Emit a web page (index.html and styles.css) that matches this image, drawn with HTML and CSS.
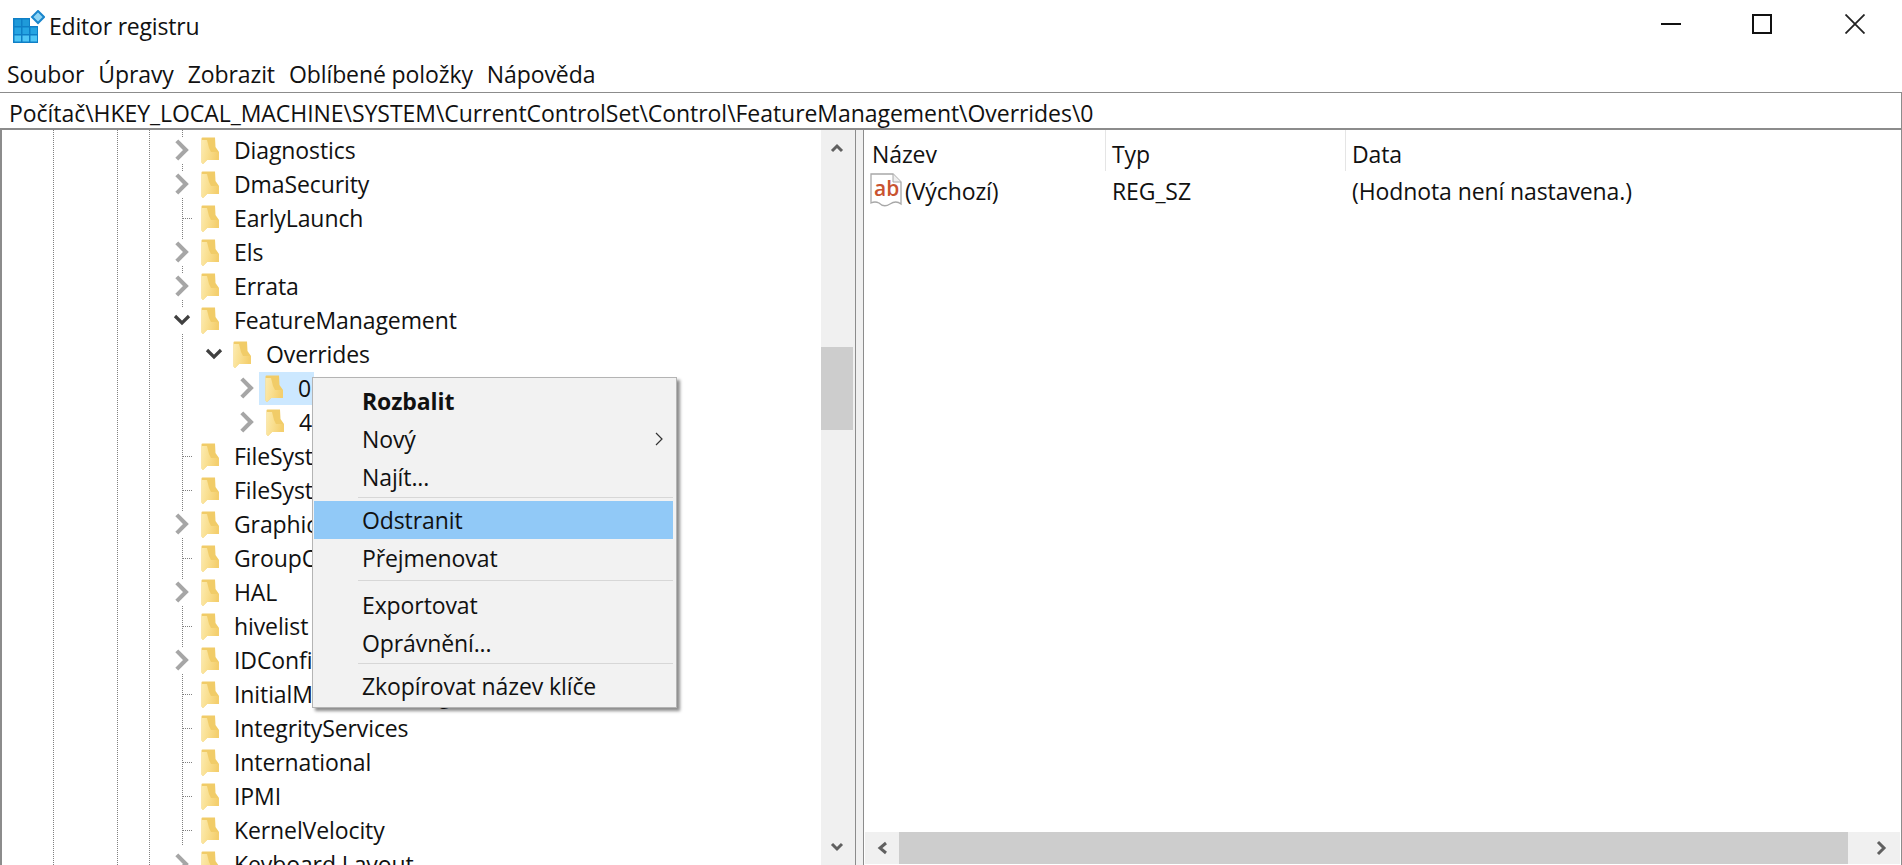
FILE: index.html
```html
<!DOCTYPE html>
<html lang="cs">
<head>
<meta charset="utf-8">
<title>Editor registru</title>
<link rel="stylesheet" href="styles.css">
</head>
<body>
<svg class="defs" width="0" height="0" aria-hidden="true">
  <defs>
    <linearGradient id="fg" x1="0" y1="0" x2="1" y2="0.25">
      <stop offset="0" stop-color="#fcebb0"/>
      <stop offset="0.5" stop-color="#f9de8e"/>
      <stop offset="1" stop-color="#f4cf6e"/>
    </linearGradient>
    <symbol id="folder" viewBox="0 0 18 27">
      <path d="M0.5 1.5 Q0.5 .5 1.5 .5 H14 L14.5 10 L18 15 V23 H6 L2 27 L0.5 25.5 Z" fill="#f1cc68"/>
      <path d="M0.5 3 L6 3 L8 11 L10 15 L18 15 V23 H6 L2 27 L0.5 25.5 Z" fill="url(#fg)"/>
    </symbol>
    <symbol id="chev-r" viewBox="0 0 14 20"><path d="M3 3 L10 10 L3 17" fill="none" stroke="#a6a6a6" stroke-width="3.2"/></symbol>
    <symbol id="chev-d" viewBox="0 0 20 14"><path d="M3 3 L10 10 L17 3" fill="none" stroke="#404040" stroke-width="3.2"/></symbol>
  </defs>
</svg>

<header class="titlebar">
  <svg class="app-icon" viewBox="0 0 32 34" width="32" height="34">
    <path d="M0 8 H17 V16 H25 V33 H0 Z" fill="#0f7fc6"/>
    <rect x="1.5" y="9.5" width="6.5" height="6.5" fill="#1f9ad9"/><rect x="9.5" y="9.5" width="6.5" height="6.5" fill="#1f9ad9"/>
    <rect x="1.5" y="17.5" width="6.5" height="6.5" fill="#25a4e2"/><rect x="9.5" y="17.5" width="6.5" height="6.5" fill="#25a4e2"/><rect x="17.5" y="17.5" width="6.5" height="6.5" fill="#25a4e2"/>
    <rect x="1.5" y="25.5" width="6.5" height="6" fill="#4fc6f5"/><rect x="9.5" y="25.5" width="6.5" height="6" fill="#4fc6f5"/><rect x="17.5" y="25.5" width="6.5" height="6" fill="#4fc6f5"/>
    <path d="M25 1 L31 7 L25 13 L19 7 Z" fill="#8fd5f5" stroke="#1a86cc" stroke-width="2"/>
  </svg>
  <span class="title">Editor registru</span>
  <div class="controls">
    <svg class="ctl ctl-min" viewBox="0 0 20 20" width="20" height="20"><path d="M0 10 H20" stroke="#111" stroke-width="2"/></svg>
    <svg class="ctl ctl-max" viewBox="0 0 20 20" width="20" height="20"><rect x="1" y="1" width="18" height="18" fill="none" stroke="#111" stroke-width="2"/></svg>
    <svg class="ctl ctl-close" viewBox="0 0 20 20" width="20" height="20"><path d="M0.5 0.5 L19.5 19.5 M19.5 0.5 L0.5 19.5" stroke="#222" stroke-width="1.8"/></svg>
  </div>
</header>

<nav class="menubar">
  <span>Soubor</span><span>Úpravy</span><span>Zobrazit</span><span>Oblíbené položky</span><span>Nápověda</span>
</nav>

<div class="address">Počítač\HKEY_LOCAL_MACHINE\SYSTEM\CurrentControlSet\Control\FeatureManagement\Overrides\0</div>

<main class="panes">
  <section class="tree-pane">
    <ul class="tree">
      <li class="row"><svg class="chev"><use href="#chev-r"/></svg><svg class="folder"><use href="#folder"/></svg><span>Diagnostics</span></li>
      <li class="row"><svg class="chev"><use href="#chev-r"/></svg><svg class="folder"><use href="#folder"/></svg><span>DmaSecurity</span></li>
      <li class="row"><i class="tick"></i><svg class="folder"><use href="#folder"/></svg><span>EarlyLaunch</span></li>
      <li class="row"><svg class="chev"><use href="#chev-r"/></svg><svg class="folder"><use href="#folder"/></svg><span>Els</span></li>
      <li class="row"><svg class="chev"><use href="#chev-r"/></svg><svg class="folder"><use href="#folder"/></svg><span>Errata</span></li>
      <li class="row"><svg class="chev open"><use href="#chev-d"/></svg><svg class="folder"><use href="#folder"/></svg><span>FeatureManagement</span></li>
      <li class="row lvl2"><svg class="chev open"><use href="#chev-d"/></svg><svg class="folder"><use href="#folder"/></svg><span>Overrides</span></li>
      <li class="row lvl3"><svg class="chev"><use href="#chev-r"/></svg><div class="selected"><svg class="folder"><use href="#folder"/></svg><span>0</span></div></li>
      <li class="row lvl3"><svg class="chev"><use href="#chev-r"/></svg><svg class="folder"><use href="#folder"/></svg><span>4</span></li>
      <li class="row"><i class="tick"></i><svg class="folder"><use href="#folder"/></svg><span>FileSystem</span></li>
      <li class="row"><i class="tick"></i><svg class="folder"><use href="#folder"/></svg><span>FileSystemUtilities</span></li>
      <li class="row"><svg class="chev"><use href="#chev-r"/></svg><svg class="folder"><use href="#folder"/></svg><span>GraphicsDrivers</span></li>
      <li class="row"><i class="tick"></i><svg class="folder"><use href="#folder"/></svg><span>GroupOrderList</span></li>
      <li class="row"><svg class="chev"><use href="#chev-r"/></svg><svg class="folder"><use href="#folder"/></svg><span>HAL</span></li>
      <li class="row"><i class="tick"></i><svg class="folder"><use href="#folder"/></svg><span>hivelist</span></li>
      <li class="row"><svg class="chev"><use href="#chev-r"/></svg><svg class="folder"><use href="#folder"/></svg><span>IDConfigDB</span></li>
      <li class="row"><i class="tick"></i><svg class="folder"><use href="#folder"/></svg><span>InitialMachineConfig</span></li>
      <li class="row"><i class="tick"></i><svg class="folder"><use href="#folder"/></svg><span>IntegrityServices</span></li>
      <li class="row"><i class="tick"></i><svg class="folder"><use href="#folder"/></svg><span>International</span></li>
      <li class="row"><i class="tick"></i><svg class="folder"><use href="#folder"/></svg><span>IPMI</span></li>
      <li class="row"><i class="tick"></i><svg class="folder"><use href="#folder"/></svg><span>KernelVelocity</span></li>
      <li class="row"><svg class="chev"><use href="#chev-r"/></svg><svg class="folder"><use href="#folder"/></svg><span>Keyboard Layout</span></li>
    </ul>
    <div class="vscroll">
      <svg class="sb-btn" viewBox="0 0 32 34" width="32" height="34"><path d="M11 21 L16 16 L21 21" fill="none" stroke="#606060" stroke-width="3"/></svg>
      <div class="vtrack"><div class="vthumb"></div></div>
      <svg class="sb-btn" viewBox="0 0 32 34" width="32" height="34"><path d="M11 13 L16 18 L21 13" fill="none" stroke="#606060" stroke-width="3"/></svg>
    </div>
  </section>
  <div class="splitter"></div>
  <section class="list-pane">
    <div class="list-head">
      <div class="col col-name">Název</div>
      <div class="col col-type">Typ</div>
      <div class="col col-data">Data</div>
    </div>
    <div class="list-row">
      <div class="col col-name cell-name">
        <svg class="ab" viewBox="0 0 32 34" width="32" height="34">
          <path d="M1 1 H23 L31 9 V31 Q26 27 20 31 T9 30 Q5 28 1 30 Z" fill="#fff" stroke="#a8a8a8" stroke-width="1.3"/>
          <path d="M23 1 V9 H31" fill="#efefef" stroke="#a8a8a8" stroke-width="1"/>
          <text x="4" y="23" class="ab-text">ab</text>
        </svg>
        <span>(Výchozí)</span>
      </div>
      <div class="col col-type">REG_SZ</div>
      <div class="col col-data">(Hodnota není nastavena.)</div>
    </div>
    <div class="list-fill"></div>
    <div class="hscroll">
      <svg class="sb-btn" viewBox="0 0 34 32" width="34" height="32"><path d="M21 11 L15 16 L21 21" fill="none" stroke="#606060" stroke-width="3"/></svg>
      <div class="hthumb"></div>
      <svg class="sb-btn sb-right" viewBox="0 0 52 32" width="52" height="32"><path d="M30 10 L36 16 L30 22" fill="none" stroke="#606060" stroke-width="3"/></svg>
    </div>
  </section>
</main>

<div class="ctx">
  <div class="ctx-item strong">Rozbalit</div>
  <div class="ctx-item">Nový<svg class="sub" viewBox="0 0 8 14" width="8" height="14"><path d="M1 1 L7 7 L1 13" fill="none" stroke="#333" stroke-width="1.2"/></svg></div>
  <div class="ctx-item">Najít...</div>
  <div class="ctx-sep sep-a"></div>
  <div class="ctx-item hot">Odstranit</div>
  <div class="ctx-item">Přejmenovat</div>
  <div class="ctx-sep sep-b"></div>
  <div class="ctx-item">Exportovat</div>
  <div class="ctx-item">Oprávnění...</div>
  <div class="ctx-sep sep-a"></div>
  <div class="ctx-item">Zkopírovat název klíče</div>
</div>
</body>
</html>
```
FILE: styles.css
```css
* { box-sizing: border-box; }
html, body { margin: 0; height: 100%; }
body {
  width: 1902px; height: 865px; overflow: hidden; position: relative;
  background: #fff; color: #111;
  font-family: "Open Sans", "Noto Sans", sans-serif; font-size: 23px;
  letter-spacing: -0.1px;
}
.defs { position: absolute; }

.titlebar { height: 55px; display: flex; align-items: center; padding-left: 13px; }
.app-icon { flex: none; margin-top: -1px; }
.title { margin-left: 4px; margin-top: -3px; letter-spacing: -0.2px; }
.controls { margin-left: auto; display: flex; align-items: center; margin-top: -7px; padding-right: 37px; }
.ctl-max { margin-left: 71px; }
.ctl-close { margin-left: 73px; }

.menubar { height: 37px; display: flex; align-items: center; gap: 14px; padding-left: 7px; }

.address { height: 38px; border: 1px solid #8c8c8c; border-bottom-width: 2px; border-left: 0; padding-left: 9px; line-height: 40px; white-space: nowrap; letter-spacing: -0.05px; }

.panes { height: 735px; display: flex; border-left: 2px solid #8c8c8c; border-right: 1px solid #8c8c8c; }

.tree-pane { width: 853px; flex: none; display: flex; height: 100%; overflow: hidden; }
.tree {
  list-style: none; margin: 0; padding: 3px 0 0; width: 819px; flex: none; height: 100%; overflow: hidden;
  background:
    repeating-linear-gradient(to bottom, #808080 0 1px, transparent 1px 2px) 51px 0 / 1px 100% no-repeat,
    repeating-linear-gradient(to bottom, #808080 0 1px, transparent 1px 2px) 115px 0 / 1px 100% no-repeat,
    repeating-linear-gradient(to bottom, #808080 0 1px, transparent 1px 2px) 147px 0 / 1px 100% no-repeat,
    repeating-linear-gradient(to bottom, #808080 0 1px, transparent 1px 2px) 180px 0 / 1px 716px no-repeat;
}
.row { height: 34px; display: flex; align-items: center; padding-left: 170px; white-space: nowrap; }
.row.lvl2 { padding-left: 202px; }
.row.lvl3 { padding-left: 235px; }
.chev { width: 20px; height: 26px; flex: none; background: #fff; padding: 0; }
.tick { width: 20px; height: 1px; flex: none; background: repeating-linear-gradient(to right, transparent 0 1px, #808080 1px 2px) 10px 0 / 14px 1px no-repeat; }
.folder { width: 18px; height: 27px; flex: none; margin-left: 9px; }
.row span { margin-left: 15px; }
.selected { display: flex; align-items: center; height: 33px; width: 55px; background: #cce8ff; margin-left: 2px; padding-left: 1px; }
.selected .folder { margin-left: 5px; }

.vscroll { width: 34px; flex: none; background: #f0f0f0; display: flex; flex-direction: column; height: 100%; }
.sb-btn { flex: none; display: block; }
.vtrack { flex: 1; min-height: 0; padding-top: 183px; }
.vthumb { height: 83px; width: 32px; background: #cdcdcd; }

.splitter { width: 9px; flex: none; background: #f0f0f0; border-left: 1px solid #8c8c8c; border-right: 1px solid #8c8c8c; }

.list-pane { flex: 1; display: flex; flex-direction: column; min-width: 0; }
.list-head { height: 41px; display: flex; align-items: center; flex: none; }
.list-row { height: 38px; display: flex; align-items: center; flex: none; padding-top: 2px; }
.col { white-space: nowrap; padding-left: 8px; }
.col-name { width: 242px; }
.col-type { width: 240px; padding-left: 6px; }
.col-data { flex: 1; padding-left: 6px; }
.list-head .col { height: 100%; display: flex; align-items: center; border-right: 1px solid #e5e5e5; padding-top: 6px; }
.list-head .col-data { border-right: 0; }
.cell-name { display: flex; align-items: center; padding-left: 6px; }
.ab { flex: none; margin-right: 3px; margin-top: -2px; }
.ab-text { font-family: "Open Sans", sans-serif; font-size: 21px; font-weight: 600; fill: #c9532f; letter-spacing: 0; }
.list-fill { flex: 1; }
.hscroll { height: 32px; flex: none; margin-bottom: 1px; background: #f0f0f0; display: flex; margin-left: 1px; margin-right: 1px; }
.hthumb { flex: 1; background: #cdcdcd; }

.ctx {
  position: absolute; left: 312px; top: 377px; width: 365px; height: 331px;
  background: #f2f2f2; border: 1px solid #b4b4b4; padding: 4px 3px 0 1px;
  box-shadow: 3px 3px 3px rgba(0,0,0,.45);
}
.ctx-item { height: 38px; display: flex; align-items: center; padding-left: 48px; padding-right: 8px; justify-content: space-between; white-space: nowrap; padding-bottom: 1px; }
.ctx-item.strong { font-weight: 700; }
.ctx-item.hot { background: #91c9f7; padding-bottom: 0; }
.ctx-sep { margin-left: 44px; }
.sep-a { height: 5px; background: linear-gradient(#d7d7d7, #d7d7d7) 0 1px / 100% 1px no-repeat; }
.sep-b { height: 9px; background: linear-gradient(#d7d7d7, #d7d7d7) 0 3px / 100% 1px no-repeat; }
.sub { margin-right: 2px; }
```
